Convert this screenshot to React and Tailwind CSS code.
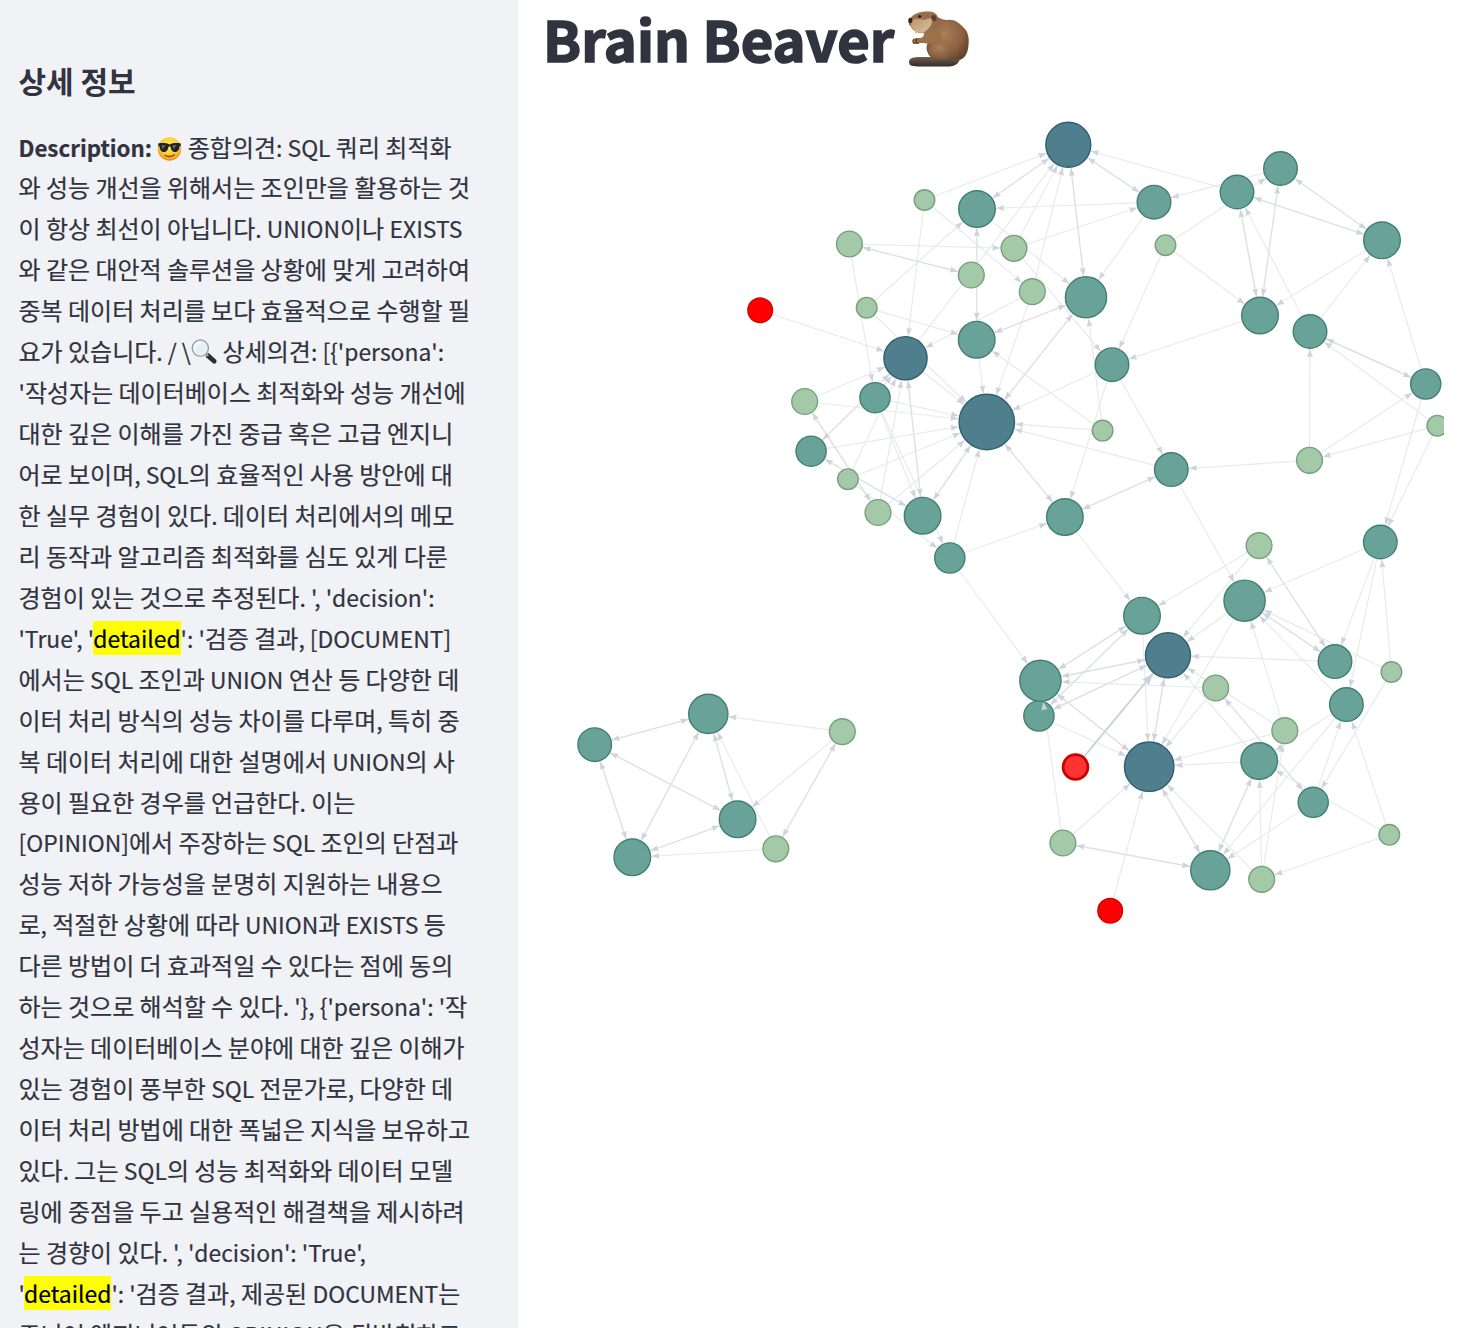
const NODES = {
  A: [1068.3, 144.8, 23.2, 'b'], B: [924.5, 200, 11, 'l'], C: [977, 209, 19, 't'], D: [1154, 202.2, 17.5, 't'],
  E: [1237, 192, 17.5, 't'], F: [1280.5, 168.5, 17.5, 't'], G: [849.4, 244, 13.6, 'l'], H: [1014, 248.3, 13.6, 'l'],
  I: [1165.5, 245.2, 11, 'l'], J: [1382, 240.3, 19, 't'], K: [971.3, 275, 13.6, 'l'], L: [1032.3, 291.7, 13.6, 'l'],
  M: [1086, 297.3, 21.3, 't'], N: [866.7, 307.7, 11, 'l'], O: [760.2, 310.3, 13, 'r'], P: [976.7, 339.7, 19, 't'],
  Q: [905.5, 358.2, 22.3, 'b'], R: [1260, 315.5, 19, 't'], S: [1310, 331.5, 17.5, 't'], T: [1112, 364.7, 17.5, 't'],
  U: [1425.7, 384, 15.8, 't'], V: [875, 397.7, 15.8, 't'], W: [804.7, 401.5, 13.6, 'l'], X: [986.8, 422, 28.4, 'b'],
  Y: [1102.6, 430.6, 11, 'l'], Z: [1437.3, 425.7, 11, 'l'], a: [811.1, 451.2, 15.8, 't'], b: [847.9, 479.2, 11, 'l'],
  c: [878, 512.5, 13.6, 'l'], d: [922.6, 515.7, 19, 't'], e: [949.8, 558, 15.8, 't'], f: [1064.9, 517, 19, 't'],
  g: [1171.3, 469.6, 17.5, 't'], h: [1309.5, 460.3, 13.6, 'l'], i: [1380.3, 542, 17.5, 't'], j: [1259.1, 545.6, 13.6, 'l'],
  k: [1244.6, 600.7, 21.3, 't'], l: [1142, 615.7, 19, 't'], m: [1168, 655.3, 23.2, 'b'], n: [1335, 661.6, 17.5, 't'],
  o: [1391.4, 672, 11, 'l'], q: [1038.9, 716, 15.8, 't'], p: [1040.4, 680.8, 21.3, 't'], r: [1215.7, 688, 13.6, 'l'],
  s: [1346.4, 704.6, 17.5, 't'], t: [1284.8, 730.7, 13.6, 'l'], u: [1259.2, 761, 19, 't'], v: [1149.2, 766.7, 25.4, 'b'],
  w: [1075.5, 767, 13.8, 's'], x: [1313.2, 802.3, 15.8, 't'], y: [1389.3, 834.8, 11, 'l'], z: [1062.9, 843, 13.6, 'l'],
  AA: [1210.3, 870.3, 20.3, 't'], AB: [1261.7, 879.3, 13.6, 'l'], AC: [1110.2, 910.8, 13, 'r'],
  C1: [594.7, 744.7, 17.5, 't'], C2: [708.3, 713.9, 20.3, 't'], C3: [632.3, 857.3, 19, 't'],
  C4: [737.6, 819.3, 19, 't'], C5: [842.3, 731.7, 13.6, 'l'], C6: [775.8, 848.8, 13.6, 'l'],
};

const ONE_WAY = `B-A B-Q B-L Q-A H-A L-A D-C C-M H-D H-T G-H G-V N-C N-P N-X Q-X L-Q L-X P-X Y-M Y-P Y-X T-X g-X D-M
E-A F-D I-F I-T I-R J-R R-T S-E S-J U-J Z-S h-S h-U Z-h Z-i U-i h-g T-g T-f g-k W-Q W-X V-X a-X b-X c-X e-X e-f e-p
f-l b-Q c-Q V-d V-e b-e V-Q j-l j-m k-m k-v n-m i-k i-n i-s o-i o-k o-x s-k t-k t-v s-u t-m u-m r-p r-v q-v l-v z-p
z-v AB-v AB-u AB-t s-AA x-AA x-s y-s y-u y-AB u-v C5-C2 C5-C4 C6-C2 C6-C3`.split(/\s+/);
const TWO_WAY = `A-C A-M A-D C-P G-K M-P M-X E-J F-J E-R F-R U-S g-f X-f X-d Q-d Q-a W-c a-d k-n n-j x-r m-p m-q m-v
p-l q-l p-v z-AA v-AA u-AA C1-C2 C1-C4 C1-C3 C2-C3 C2-C4 C3-C4 C5-C6`.split(/\s+/);
const DOTTED = ['O-Q', 'AC-v'];

const PALETTE = {
  b: ['#4f7f8d', '#2d6072', 1.4],
  t: ['#69a298', '#40806f', 1.4],
  l: ['#a4c9a8', '#77a07c', 1.4],
  r: ['#ff0000', '#d00000', 1.4],
  s: ['#ff3333', '#cc0000', 2.8],
};

function segment(id) {
  const [from, to] = id.split('-');
  return [NODES[from], NODES[to]];
}

function Edge({ id, color, width, dash }) {
  const [p, q] = segment(id);
  return <line x1={p[0]} y1={p[1]} x2={q[0]} y2={q[1]} stroke={color} strokeWidth={width} strokeDasharray={dash} />;
}

function Arrow({ from, to, size = 8, color = '#cfd4dc' }) {
  const angle = Math.atan2(to[1] - from[1], to[0] - from[0]);
  const x = to[0] - Math.cos(angle) * (to[2] + 0.2);
  const y = to[1] - Math.sin(angle) * (to[2] + 0.2);
  return (
    <path
      d="M0 0L-1 .37L-.9 0L-1 -.37Z"
      fill={color}
      transform={`translate(${x} ${y}) rotate(${(angle * 180) / Math.PI}) scale(${size})`}
    />
  );
}

function Graph() {
  return (
    <svg className="block h-[830px] w-[900px]" viewBox="544 110 900 830">
      {ONE_WAY.map((id) => <Edge key={id} id={id} color="#e8eaed" width={1.2} />)}
      {TWO_WAY.map((id) => <Edge key={id} id={id} color="#dde1e7" width={1.4} />)}
      {DOTTED.map((id) => <Edge key={id} id={id} color="#cfd1d5" width={1} dash="1 1" />)}
      <Edge id="w-m" color="#cdd2da" width={1.9} />
      {Object.entries(NODES).map(([id, [x, y, r, kind]]) => {
        const [fill, stroke, width] = PALETTE[kind];
        return <circle key={id} cx={x} cy={y} r={r - width / 2} fill={fill} stroke={stroke} strokeWidth={width} />;
      })}
      {[...ONE_WAY, ...TWO_WAY, ...DOTTED].map((id) => {
        const [p, q] = segment(id);
        return <Arrow key={id} from={p} to={q} />;
      })}
      {TWO_WAY.map((id) => {
        const [p, q] = segment(id);
        return <Arrow key={id} from={q} to={p} />;
      })}
      <Arrow from={NODES.w} to={NODES.m} size={12} color="#cdd2da" />
    </svg>
  );
}

function Beaver() {
  return (
    <svg className="h-[56px] w-[62px]" viewBox="0 0 62 56">
      <defs>
        <radialGradient id="fur" cx=".45" cy=".4" r=".65">
          <stop offset="0" stopColor="#a97e58" />
          <stop offset=".6" stopColor="#8d6241" />
          <stop offset="1" stopColor="#61402b" />
        </radialGradient>
        <linearGradient id="tail" x2="0" y2="1">
          <stop offset="0" stopColor="#6e5e52" />
          <stop offset="1" stopColor="#352c27" />
        </linearGradient>
        <linearGradient id="cheek" x2="1" y2="1">
          <stop offset="0" stopColor="#b8966f" />
          <stop offset="1" stopColor="#dcc19d" />
        </linearGradient>
        <radialGradient id="thigh" cx=".5" cy=".3" r=".7">
          <stop offset="0" stopColor="#ab8059" />
          <stop offset="1" stopColor="#80583a" />
        </radialGradient>
      </defs>
      <path d="M28 5C33 8 36 9 40 9C46 8 51 12 55 16C60 20 61.500 27 60.500 34C60 42 57 47 52 49C47 51 30 51 24 47C19 43 17 37 20 31L16 22Z" fill="url(#fur)" />
      <path d="M1 51C1 47 5 46 13 46H24C34 48 44 49 52 48C50 54 46 55.500 38 55.500H12C5 55.500 1 55 1 51Z" fill="url(#tail)" />
      <path d="M21 44C18 37 26 30 35 32C43 34 45 44 39 48C32 48.500 25 47.500 21 44Z" fill="url(#thigh)" />
      <path d="M21 19C15 21 17 27 12 27L7 27C5 29 5 31 8 32H16C23 34 33 31 33 24C33 18 27 17 21 19Z" fill="#9b704b" />
      <path d="M6 28C4 30 5 33 8 32M9 28C7 30 8 33 11 32" fill="none" stroke="#5e3b25" strokeWidth="1.300" />
      <path d="M1 9C5 2 13 0 22 .5C28 1 31 5 29 10C28 16 23 20 17 22C11 23 5 20 3 16C1 14 0 12 1 9Z" fill="#94704c" />
      <path d="M3 10C7 7 12 8 16 9L23 7C26 11 22 18 15 22C9 22 4 18 3 15Z" fill="url(#cheek)" />
      <path d="M23 6C24 3 29 3 28.500 8C28 11 26 11 24 9Z" fill="#653a2c" />
      <ellipse cx="2.300" cy="9.500" rx="2" ry="2.800" fill="#33231c" />
      <ellipse cx="11.700" cy="5.500" rx="1.700" ry="1.300" fill="#241914" />
      <path d="M7 19L9 20L8.500 23L7 22Z" fill="#f3bd69" />
    </svg>
  );
}

function Sunglasses() {
  return (
    <svg className="inline-block h-[24px] w-[25px] align-[-4px]" viewBox="0 0 24 24">
      <defs>
        <radialGradient id="face" cx=".5" cy=".35" r=".65">
          <stop offset="0" stopColor="#fff04f" />
          <stop offset=".65" stopColor="#fdc935" />
          <stop offset="1" stopColor="#ee8a1c" />
        </radialGradient>
      </defs>
      <circle cx="12" cy="12" r="11.800" fill="url(#face)" />
      <path d="M.7 6.500C5 5.700 9 6 12 7.500C15 6 19 5.700 23.300 6.500V9L22 9.500C21.500 14 19.500 15.300 17 15C14 14.800 13.500 12 13 9.800C12.500 9 11.500 9 11 9.800C10.500 12 10 14.800 7 15C4.500 15.300 2.500 14 2 9.500L.7 9Z" fill="#20242a" />
      <path d="M4 8.500L8 8L5 12ZM15 8.500L19 8L16 12Z" fill="#6c747c" />
      <path d="M7.500 18.300C10.500 20 14 19.800 17 17.800" fill="none" stroke="#7d4515" strokeWidth="1.300" strokeLinecap="round" />
    </svg>
  );
}

function Magnifier() {
  return (
    <svg className="inline-block h-[26px] w-[26.500px] align-[-4px]" viewBox="0 0 27 26">
      <path d="M15.500 15.500L18 14L25.500 21C27 23 25 26 22.500 24.500L15 18Z" fill="#2b2e31" />
      <path d="M14 14L17.500 17" stroke="#9da3a8" strokeWidth="2.500" />
      <circle cx="9.500" cy="9" r="8.300" fill="#e6f0f2" stroke="#8d969b" strokeWidth="1.200" />
      <path d="M4 9C4 5.500 7 3.500 10 3.500" fill="none" stroke="#fff" strokeWidth="2" />
    </svg>
  );
}

function Mark({ children }) {
  return <mark className="bg-[#ffff00] text-[22.900px] text-black">{children}</mark>;
}

// Latin runs are set slightly smaller than the Hangul around them.
function T({ children }) {
  return children.split(/([!-~]+(?: +[!-~]+)*)/).map((part, index) =>
    index % 2 ? <span key={index} className="text-[22.900px]">{part}</span> : part
  );
}

const LINES = [
  <><b className="text-[22.300px]">Description:</b> <Sunglasses /><T> 종합의견: SQL 쿼리 최적화</T></>,
  '와 성능 개선을 위해서는 조인만을 활용하는 것',
  '이 항상 최선이 아닙니다. UNION이나 EXISTS',
  '와 같은 대안적 솔루션을 상황에 맞게 고려하여',
  '중복 데이터 처리를 보다 효율적으로 수행할 필',
  <><T>{'요가 있습니다. / \\'}</T><Magnifier /><T>{" 상세의견: [{'persona':"}</T></>,
  "'작성자는 데이터베이스 최적화와 성능 개선에",
  '대한 깊은 이해를 가진 중급 혹은 고급 엔지니',
  '어로 보이며, SQL의 효율적인 사용 방안에 대',
  '한 실무 경험이 있다. 데이터 처리에서의 메모',
  '리 동작과 알고리즘 최적화를 심도 있게 다룬',
  "경험이 있는 것으로 추정된다. ', 'decision':",
  <><T>{"'True', '"}</T><Mark>detailed</Mark><T>{"': '검증 결과, [DOCUMENT]"}</T></>,
  '에서는 SQL 조인과 UNION 연산 등 다양한 데',
  '이터 처리 방식의 성능 차이를 다루며, 특히 중',
  '복 데이터 처리에 대한 설명에서 UNION의 사',
  '용이 필요한 경우를 언급한다. 이는',
  '[OPINION]에서 주장하는 SQL 조인의 단점과',
  '성능 저하 가능성을 분명히 지원하는 내용으',
  '로, 적절한 상황에 따라 UNION과 EXISTS 등',
  '다른 방법이 더 효과적일 수 있다는 점에 동의',
  "하는 것으로 해석할 수 있다. '}, {'persona': '작",
  '성자는 데이터베이스 분야에 대한 깊은 이해가',
  '있는 경험이 풍부한 SQL 전문가로, 다양한 데',
  '이터 처리 방법에 대한 폭넓은 지식을 보유하고',
  '있다. 그는 SQL의 성능 최적화와 데이터 모델',
  '링에 중점을 두고 실용적인 해결책을 제시하려',
  "는 경향이 있다. ', 'decision': 'True',",
  <><T>{"'"}</T><Mark>detailed</Mark><T>{"': '검증 결과, 제공된 DOCUMENT는"}</T></>,
  '주니어 엔지니어들의 OPINION을 뒷받침하고',
];

export default function App() {
  return (
    <div className="flex h-[1328px] w-[1460px] overflow-hidden bg-white font-['Noto_Sans_CJK_KR',sans-serif] text-[#31333f]">
      <aside className="h-full w-[518px] shrink-0 overflow-hidden bg-[#f0f2f6] pl-[18.500px] pt-[58.500px]">
        <h2 className="text-[30px] font-bold leading-[42px]">상세 정보</h2>
        <div className="mt-[26px] text-[24px] [-webkit-text-stroke:0.2px_currentColor] [word-spacing:-0.05px]">
          {LINES.map((line, index) => (
            <p key={index} className="h-[40.940px] whitespace-nowrap leading-[40.940px]">
              {typeof line === 'string' ? <T>{line}</T> : line}
            </p>
          ))}
        </div>
      </aside>
      <main className="flex min-w-0 flex-1 flex-col pl-[26px]">
        <header className="flex h-[110px] items-start gap-[14px]">
          <h1 className="-ml-px -mt-[3px] text-[56px] font-bold leading-[82px] [-webkit-text-stroke:1.700px_currentColor]">Brain Beaver</h1>
          <div className="pt-[11px]"><Beaver /></div>
        </header>
        <Graph />
      </main>
    </div>
  );
}
